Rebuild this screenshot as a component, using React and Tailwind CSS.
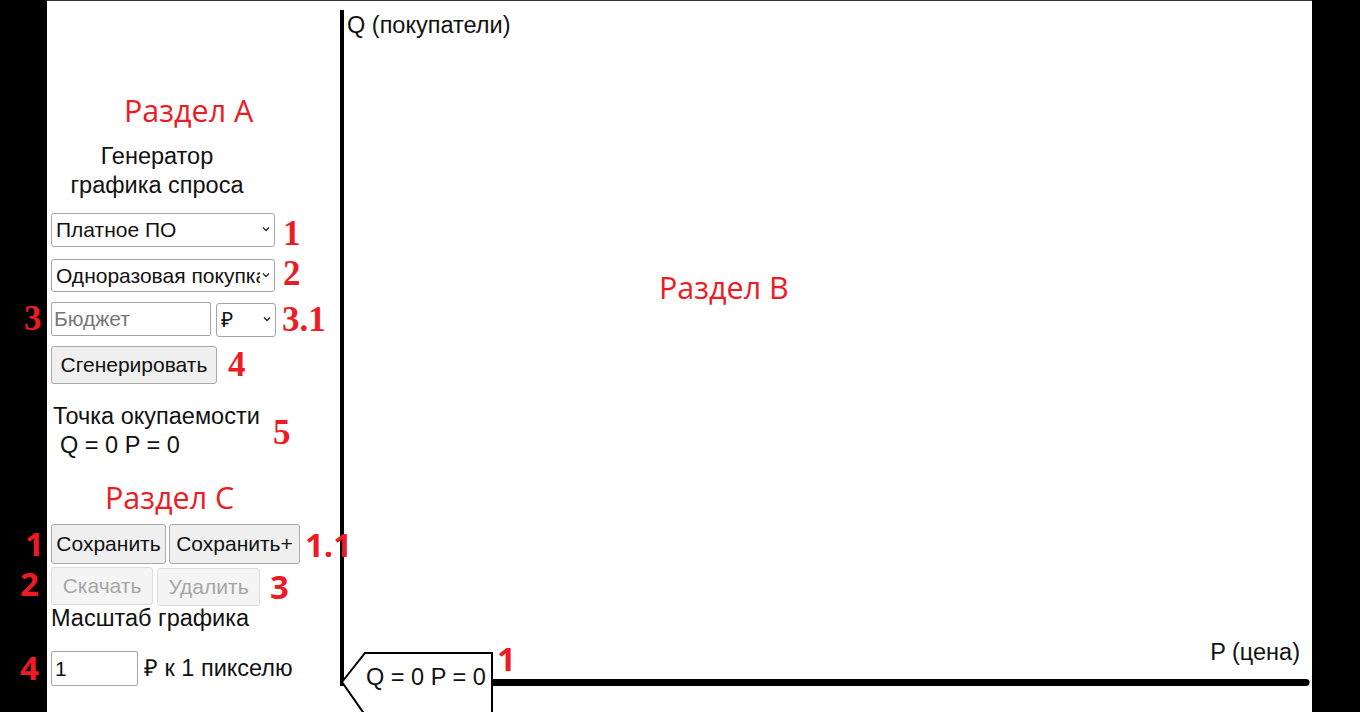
import React from 'react';

const serifNum = "absolute text-[35px] leading-[36px] font-bold text-[#ed1c24] font-['Liberation_Serif',serif]";
const sansNum = "absolute text-[33px] leading-[36px] font-bold text-[#ed1c24] font-['Open_Sans',sans-serif]";
const section = "absolute text-[30.5px] leading-[40px] text-[#ed1c24] font-['Open_Sans',sans-serif]";
const btn = "bg-[#efefef] border border-[#a9a9a9] rounded-[3px] text-[21px]";
const btnOff = "bg-[#f4f4f4] border border-[#dcdcdc] rounded-[3px] text-[21px] text-[#a6a6a6]";

function Chevron() {
  return (
    <svg className="pointer-events-none absolute right-[5px] top-1/2 -translate-y-1/2" width="8" height="5" viewBox="0 0 8 5">
      <path d="M1 1 L4 4 L7 1" fill="none" stroke="#222" strokeWidth="1.3" />
    </svg>
  );
}

function Select({ className, children }) {
  return (
    <div className={`relative ${className}`}>
      <select className="w-full h-full appearance-none bg-white border border-[#a5a5a5] rounded-[3px] pl-[4px] pr-[14px] text-[21px] text-[#111] outline-none">
        {children}
      </select>
      <Chevron />
    </div>
  );
}

export default function App() {
  return (
    <div className="relative w-[1360px] h-[712px] bg-black overflow-hidden flex font-['Liberation_Sans',Arial,sans-serif] text-[23.5px] text-[#111]">
      <div className="ml-[47px] w-[1265px] h-full bg-white border-t border-[#333] flex">
        {/* Sidebar */}
        <div className="w-[293px] shrink-0 flex flex-col items-start pl-[4px]">
          <div className="mt-[141px] w-[212px] text-center leading-[29px] whitespace-nowrap">
            Генератор<br />графика спроса
          </div>

          <Select className="mt-[12px] w-[224px] h-[34px]">
            <option>Платное ПО</option>
          </Select>
          <Select className="mt-[12px] w-[224px] h-[33px]">
            <option>Одноразовая покупка</option>
          </Select>

          <div className="mt-[11px] flex h-[34px]">
            <input
              placeholder="Бюджет"
              className="w-[160px] h-full border border-[#a5a5a5] rounded-[2px] pl-[2px] text-[21px] placeholder:text-[#777] outline-none"
            />
            <Select className="ml-[5px] w-[60px] h-full">
              <option>₽</option>
            </Select>
          </div>

          <button className={`mt-[10px] w-[166px] h-[38px] ${btn}`}>Сгенерировать</button>

          <div className="mt-[18px] pl-[2px] leading-[29px] whitespace-nowrap">
            <div>Точка окупаемости</div>
            <div className="pl-[7px]">Q = 0 P = 0</div>
          </div>

          <div className="mt-[64px] flex gap-[3px]">
            <button className={`w-[115px] h-[40px] ${btn}`}>Сохранить</button>
            <button className={`w-[131px] h-[40px] ${btn}`}>Сохранить+</button>
          </div>

          <div className="mt-[3px] flex gap-[4px]">
            <button disabled className={`w-[102px] h-[38px] ${btnOff}`}>Скачать</button>
            <button disabled className={`mt-[1px] w-[103px] h-[38px] ${btnOff}`}>Удалить</button>
          </div>

          <div className="leading-[24px] whitespace-nowrap">Масштаб графика</div>

          <div className="mt-[21px] flex items-center whitespace-nowrap">
            <input defaultValue="1" className="w-[87px] h-[35px] border border-[#a5a5a5] rounded-[2px] pl-[3px] text-[21px] outline-none" />
            <span className="ml-[6px]">₽ к 1 пикселю</span>
          </div>
        </div>

        {/* Chart */}
        <div className="relative flex-1">
          <svg className="absolute left-0 top-0" width="972" height="711" viewBox="0 0 972 711">
            <rect x="0" y="9" width="4" height="676" fill="#000" />
            <line x1="2" y1="681.5" x2="966" y2="681.5" stroke="#000" strokeWidth="7" strokeLinecap="round" />
            <polygon points="2,681 25,652 152,652 152,714 25,714" fill="#fff" stroke="#000" strokeWidth="2" />
          </svg>
          <span className="absolute left-[7px] top-[12px] leading-[24px] whitespace-nowrap">Q (покупатели)</span>
          <span className="absolute right-[12px] top-[639px] leading-[24px] whitespace-nowrap">P (цена)</span>
          <span className="absolute left-[26px] top-[664px] leading-[24px] whitespace-nowrap">Q = 0 P = 0</span>
          <span className={`${section} left-[319px] top-[266px]`}>Раздел B</span>
        </div>
      </div>

      {/* Annotations */}
      <span className={`${section} left-[124px] top-[90px]`}>Раздел A</span>
      <span className={`${section} left-[105px] top-[477px]`}>Раздел C</span>

      <span className={`${serifNum} left-[283px] top-[216px]`}>1</span>
      <span className={`${serifNum} left-[283px] top-[256px]`}>2</span>
      <span className={`${serifNum} left-[24px] top-[301px]`}>3</span>
      <span className={`${serifNum} left-[282px] top-[302px]`}>3.1</span>
      <span className={`${serifNum} left-[228px] top-[347px]`}>4</span>
      <span className={`${serifNum} left-[273px] top-[415px]`}>5</span>

      <span className={`${sansNum} left-[25px] top-[526px]`}>1</span>
      <span className={`${sansNum} left-[305px] top-[527px]`}>1.1</span>
      <span className={`${sansNum} left-[20px] top-[566px]`}>2</span>
      <span className={`${sansNum} left-[270px] top-[569px]`}>3</span>
      <span className={`${sansNum} left-[20px] top-[650px]`}>4</span>
      <span className={`${sansNum} left-[497px] top-[641px]`}>1</span>
    </div>
  );
}
